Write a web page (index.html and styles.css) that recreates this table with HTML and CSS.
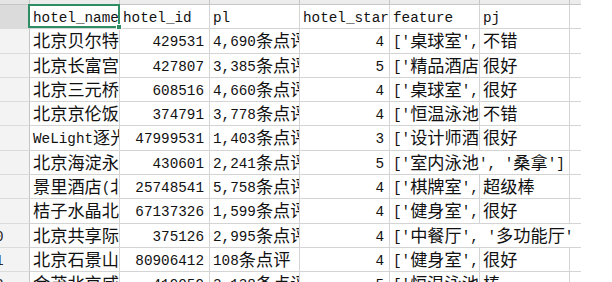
FILE: index.html
```html
<!DOCTYPE html>
<html>
<head>
<meta charset="utf-8">
<link rel="stylesheet" href="styles.css">
</head>
<body>
<div class="sheet">
  <div class="grid">
    <div class="c ch corner"></div><div class="c ch"></div><div class="c ch"></div><div class="c ch"></div><div class="c ch"></div><div class="c ch"></div><div class="c ch"></div><div class="c ch"></div>

    <div class="c rh sel">1</div>
    <div class="c">hotel_name</div><div class="c">hotel_id</div><div class="c">pl</div><div class="c">hotel_star</div><div class="c">feature</div><div class="c">pj</div><div class="c"></div>

    <div class="c rh">2</div>
    <div class="c"><span class="k">北京贝尔特酒店</span></div><div class="c n">429531</div><div class="c">4,690<span class="k">条点评</span></div><div class="c n">4</div><div class="c">['<span class="k">桌球室</span>', '<span class="k">免费停车</span>']</div><div class="c"><span class="k">不错</span></div><div class="c"></div>

    <div class="c rh">3</div>
    <div class="c"><span class="k">北京长富宫饭店</span></div><div class="c n">427807</div><div class="c">3,385<span class="k">条点评</span></div><div class="c n">5</div><div class="c">['<span class="k">精品酒店</span>']</div><div class="c"><span class="k">很好</span></div><div class="c"></div>

    <div class="c rh">4</div>
    <div class="c"><span class="k">北京三元桥酒店</span></div><div class="c n">608516</div><div class="c">4,660<span class="k">条点评</span></div><div class="c n">4</div><div class="c">['<span class="k">桌球室</span>', '<span class="k">健身室</span>']</div><div class="c"><span class="k">很好</span></div><div class="c"></div>

    <div class="c rh">5</div>
    <div class="c"><span class="k">北京京伦饭店</span></div><div class="c n">374791</div><div class="c">3,778<span class="k">条点评</span></div><div class="c n">4</div><div class="c">['<span class="k">恒温泳池</span>']</div><div class="c"><span class="k">不错</span></div><div class="c"></div>

    <div class="c rh">6</div>
    <div class="c">WeLight<span class="k">逐光酒店</span></div><div class="c n">47999531</div><div class="c">1,403<span class="k">条点评</span></div><div class="c n">3</div><div class="c">['<span class="k">设计师酒店</span>']</div><div class="c"><span class="k">很好</span></div><div class="c"></div>

    <div class="c rh">7</div>
    <div class="c"><span class="k">北京海淀永泰</span></div><div class="c n">430601</div><div class="c">2,241<span class="k">条点评</span></div><div class="c n">5</div><div class="c s2">['<span class="k">室内泳池</span>', '<span class="k">桑拿</span>']</div><div class="c"></div>

    <div class="c rh">8</div>
    <div class="c"><span class="k">景里酒店</span>(<span class="k">北京</span>)</div><div class="c n">25748541</div><div class="c">5,758<span class="k">条点评</span></div><div class="c n">4</div><div class="c">['<span class="k">棋牌室</span>', '<span class="k">健身室</span>']</div><div class="c"><span class="k">超级棒</span></div><div class="c"></div>

    <div class="c rh">9</div>
    <div class="c"><span class="k">桔子水晶北京</span></div><div class="c n">67137326</div><div class="c">1,599<span class="k">条点评</span></div><div class="c n">4</div><div class="c">['<span class="k">健身室</span>', '<span class="k">桌球室</span>']</div><div class="c"><span class="k">很好</span></div><div class="c"></div>

    <div class="c rh">10</div>
    <div class="c"><span class="k">北京共享际酒店</span></div><div class="c n">375126</div><div class="c">2,995<span class="k">条点评</span></div><div class="c n">4</div><div class="c s3">['<span class="k">中餐厅</span>', '<span class="k">多功能厅</span>'</div>

    <div class="c rh">11</div>
    <div class="c"><span class="k">北京石景山酒店</span></div><div class="c n">80906412</div><div class="c">108<span class="k">条点评</span></div><div class="c n">4</div><div class="c">['<span class="k">健身室</span>', '<span class="k">桑拿</span>']</div><div class="c"><span class="k">很好</span></div><div class="c"></div>

    <div class="c rh">12</div>
    <div class="c"><span class="k">金茂北京威斯汀</span></div><div class="c n">419059</div><div class="c">3,138<span class="k">条点评</span></div><div class="c n">5</div><div class="c">['<span class="k">恒温泳池</span>']</div><div class="c"><span class="k">棒</span></div><div class="c"></div>
  </div>
  <div class="selbox"></div>
  <div class="handle"></div>
</div>
</body>
</html>
```

FILE: styles.css
```css
html, body {
  margin: 0;
  background: #fff;
}

.sheet {
  position: relative;
  width: 581px;
  height: 282px;
  overflow: hidden;
}

.grid {
  display: grid;
  margin-left: -36px;
  grid-template-columns: 66px repeat(7, 90px);
  grid-template-rows: 5px;
  grid-auto-rows: 24.3px;
  font-family: "Liberation Mono", monospace;
  font-size: 14.3px;
  color: #111;
}

.c {
  box-sizing: border-box;
  border-right: 1px solid #d4d4d4;
  border-bottom: 1px solid #d4d4d4;
  padding: 2px 3px 0;
  line-height: 23.3px;
  white-space: nowrap;
  overflow: hidden;
}

.n {
  text-align: right;
  padding-right: 5px;
}

.k {
  font-family: "Noto Sans CJK SC", sans-serif;
  font-size: 17.2px;
  line-height: 0;
  vertical-align: -1px;
}

.ch {
  background: #ececec;
  border-color: #c6c6c6;
  padding: 0;
}

.corner {
  background: #e4e4e4;
}

.rh {
  background: #f3f3f3;
  text-align: center;
  padding-left: 0;
  padding-right: 3px;
  color: #222;
  border-right-color: #c6c6c6;
  border-bottom-color: #dcdcdc;
}

.rh.sel {
  background: #dbdbdb;
}

.s2 {
  grid-column: span 2;
}

.s3 {
  grid-column: span 3;
}

.selbox {
  position: absolute;
  left: 28px;
  top: 4px;
  width: 92px;
  height: 24px;
  border: 2px solid #2f8d63;
  box-sizing: border-box;
}

.handle {
  position: absolute;
  left: 116px;
  top: 24px;
  width: 6px;
  height: 6px;
  background: #2f8d63;
  border: 1px solid #fff;
  box-sizing: border-box;
}
```
